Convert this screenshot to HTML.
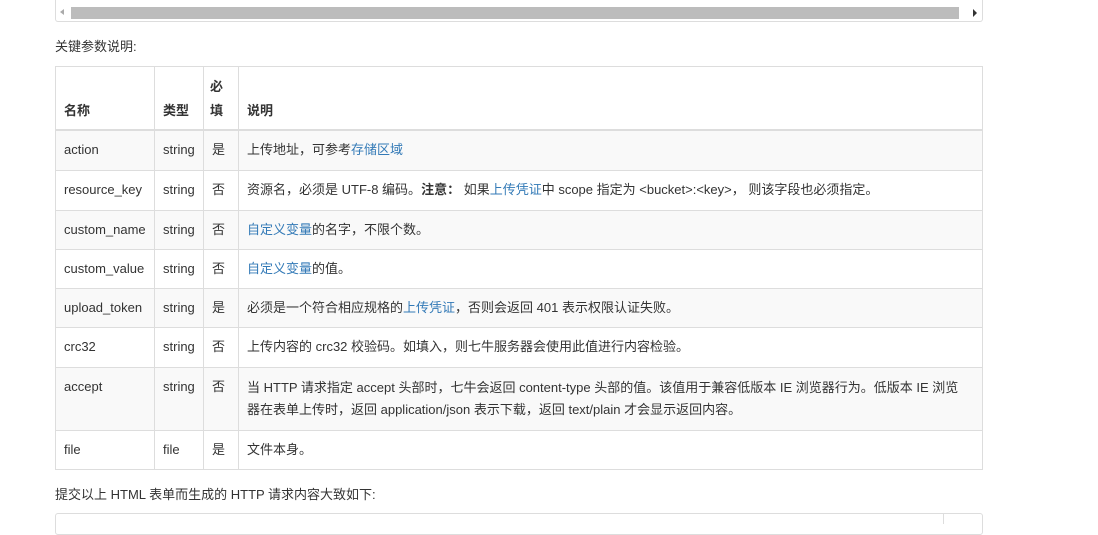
<!DOCTYPE html>
<html><head><meta charset="utf-8"><style>
body{margin:0;width:1098px;height:518px;overflow:hidden;background:#fff;font-family:"Liberation Sans","Noto Sans CJK SC",sans-serif;font-size:13px;color:#333;position:relative}
.sb{position:absolute;left:55px;top:-2px;width:926px;height:23px;border:1px solid #ddd;border-top:none;border-radius:0 0 3px 3px;background:#fff}
.track{position:absolute;left:15px;top:9px;width:888px;height:12px;background:#bcbcbc}
.la{position:absolute;left:4px;top:11px;width:0;height:0;border-top:3px solid transparent;border-bottom:3px solid transparent;border-right:4px solid #aaa}
.ra{position:absolute;right:5px;top:11px;width:0;height:0;border-top:4px solid transparent;border-bottom:4px solid transparent;border-left:4px solid #333}
p{position:absolute;left:55px;margin:0}
table{position:absolute;left:55px;top:66px;width:928px;border-collapse:collapse;table-layout:fixed}
td,th{border:1px solid #ddd;padding:0 8px;text-align:left;vertical-align:middle;line-height:20px}
th{font-weight:bold;height:56px;vertical-align:bottom;padding:0 8px 6px;line-height:24px;border-bottom:2px solid #ddd}
tr.s td{background:#f9f9f9}
a{color:#337ab7;text-decoration:none}
.bot{position:absolute;left:55px;top:513px;width:926px;height:20px;border:1px solid #ddd;border-radius:3px}
.bot i{position:absolute;left:887px;top:0;width:1px;height:10px;background:#ddd}
</style></head><body>
<div class="sb"><div class="la"></div><div class="track"></div><div class="ra"></div></div>
<p style="top:36px">关键参数说明:</p>
<table>
<colgroup><col style="width:99px"><col style="width:49px"><col style="width:35px"><col></colgroup>
<tr><th>名称</th><th>类型</th><th style="padding:0 6px 6px">必<br>填</th><th>说明</th></tr>
<tr class="s" style="height:40px"><td>action</td><td>string</td><td>是</td><td>上传地址，可参考<a>存储区域</a></td></tr>
<tr style="height:40px"><td>resource_key</td><td>string</td><td>否</td><td>资源名，必须是 UTF-8 编码。<b>注意：</b> 如果<a>上传凭证</a>中 scope 指定为 &lt;bucket&gt;:&lt;key&gt;， 则该字段也必须指定。</td></tr>
<tr class="s" style="height:39px"><td>custom_name</td><td>string</td><td>否</td><td><a>自定义变量</a>的名字，不限个数。</td></tr>
<tr style="height:39px"><td>custom_value</td><td>string</td><td>否</td><td><a>自定义变量</a>的值。</td></tr>
<tr class="s" style="height:39px"><td>upload_token</td><td>string</td><td>是</td><td>必须是一个符合相应规格的<a>上传凭证</a>，否则会返回 401 表示权限认证失败。</td></tr>
<tr style="height:40px"><td>crc32</td><td>string</td><td>否</td><td>上传内容的 crc32 校验码。如填入，则七牛服务器会使用此值进行内容检验。</td></tr>
<tr class="s" style="height:63px"><td style="vertical-align:top;padding-top:9px">accept</td><td style="vertical-align:top;padding-top:9px">string</td><td style="vertical-align:top;padding-top:9px">否</td><td style="line-height:22px;padding-right:14px">当 HTTP 请求指定 accept 头部时，七牛会返回 content-type 头部的值。该值用于兼容低版本 IE 浏览器行为。低版本 IE 浏览器在表单上传时，返回 application/json 表示下载，返回 text/plain 才会显示返回内容。</td></tr>
<tr style="height:39px"><td>file</td><td>file</td><td>是</td><td>文件本身。</td></tr>
</table>
<p style="top:484px">提交以上 HTML 表单而生成的 HTTP 请求内容大致如下:</p>
<div class="bot"><i></i></div>
</body></html>
